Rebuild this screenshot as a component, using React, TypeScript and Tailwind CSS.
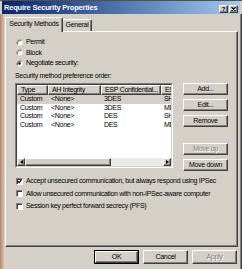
import React from "react";

const face = "bg-[#d4d0c8]";
const raised =
  "border border-t-white border-l-white border-r-[#404040] border-b-[#404040] shadow-[inset_-1px_-1px_0_#808080]";

const rows = [
  ["Custom", "<None>", "3DES", "SHA1"],
  ["Custom", "<None>", "3DES", "MD5"],
  ["Custom", "<None>", "DES", "SHA1"],
  ["Custom", "<None>", "DES", "MD5"],
];

const cols = ["w-[31px]", "w-[53px]", "w-[60px]", "w-[40px]"];

function Radio({ checked }: { checked?: boolean }) {
  return (
    <svg width="7" height="7" viewBox="0 0 14 14" className="shrink-0">
      <circle cx="7" cy="7" r="6" fill="#fff" />
      <path d="M11.2 2.8 A6 6 0 0 0 2.8 11.2" stroke="#808080" strokeWidth="2" fill="none" />
      <path d="M10 4 A4.3 4.3 0 0 0 4 10" stroke="#404040" strokeWidth="1.4" fill="none" />
      {checked && <circle cx="7" cy="7" r="2.4" fill="#000" />}
    </svg>
  );
}

function Check({ checked }: { checked?: boolean }) {
  return (
    <div className="w-[7px] h-[7px] shrink-0 bg-white border border-t-[#808080] border-l-[#808080] border-b-white border-r-white shadow-[inset_1px_1px_0_#404040] flex items-center justify-center">
      {checked && (
        <svg width="5" height="5" viewBox="0 0 7 7">
          <path d="M1 3 L3 5 L6 1.5" stroke="#000" strokeWidth="1.6" fill="none" />
        </svg>
      )}
    </div>
  );
}

function Btn({
  label,
  disabled,
  wide = "w-[45px]",
  tall = "h-[12px]",
}: {
  label: string;
  disabled?: boolean;
  wide?: string;
  tall?: string;
}) {
  return (
    <div className={`${wide} ${tall} ${face} ${raised} flex items-center justify-center`}>
      <span className={disabled ? "text-[#808080] [text-shadow:1px_1px_0_#fff]" : "text-black"}>{label}</span>
    </div>
  );
}

export default function App() {
  return (
    <div className="w-[242px] h-[269px] overflow-hidden bg-[#d4d0c8] flex flex-col font-['Liberation_Sans',Arial,sans-serif] text-[7px] tracking-[-0.3px] text-black">
      {/* desktop edge */}
      <div className="h-[1px] bg-[#4a5544]" />

      {/* title bar */}
      <div className="h-[13px] mx-[2px] flex items-center bg-gradient-to-r from-[#0a246a] to-[#a6caf0]">
        <span className="pl-[2px] text-white font-bold text-[7.5px] tracking-[-0.2px] flex-1">
          Require Security Properties
        </span>
        <div className="flex gap-[1px] pr-[2px] pt-[2px]">
          <div className={`w-[9px] h-[8px] ${face} ${raised} flex items-center justify-center font-bold text-[6px] tracking-normal leading-none`}>
            ?
          </div>
          <div className={`w-[9px] h-[8px] ${face} ${raised} flex items-center justify-center`}>
            <svg width="5" height="4" viewBox="0 0 5 4">
              <path d="M0.5 0 L4.5 4 M4.5 0 L0.5 4" stroke="#000" strokeWidth="1.1" />
            </svg>
          </div>
        </div>
      </div>

      <div className="flex-1 flex">
        {/* desktop showing at the left edge */}
        <div className="w-[4px] bg-gradient-to-r from-[#b88462] to-[#d6c2b4]" />

        <div className="flex-1 flex flex-col pt-[3px]">
          {/* tabs */}
          <div className="flex items-end h-[14px] ml-[1px]">
            <div className={`relative z-10 -mb-[1px] w-[58px] h-[15px] ${face} border-t border-l border-t-white border-l-white border-r border-r-[#404040] shadow-[inset_-1px_0_0_#808080] rounded-t-[2px] flex items-center justify-center pb-[1px]`}>
              Security Methods
            </div>
            <div className={`w-[29px] h-[12px] ${face} border-t border-t-white border-r border-r-[#404040] shadow-[inset_-1px_0_0_#808080] rounded-tr-[2px] flex items-center justify-center`}>
              General
            </div>
          </div>

          {/* tab page */}
          <div className={`ml-[1px] w-[233px] h-[216px] ${face} ${raised} flex flex-col pl-[9px] pt-[5px]`}>
            <div className="h-[10.5px] flex items-center gap-[3px] pl-[1px]">
              <Radio />
              <span>Permit</span>
            </div>
            <div className="h-[10.5px] flex items-center gap-[3px] pl-[1px]">
              <Radio />
              <span>Block</span>
            </div>
            <div className="h-[10.5px] flex items-center gap-[3px] pl-[1px]">
              <Radio checked />
              <span>Negotiate security:</span>
            </div>

            <div className="h-[10px] mt-[2.5px] flex items-center">Security method preference order:</div>

            <div className="flex mt-[2px] gap-[10px]">
              {/* list view */}
              <div className="w-[158px] h-[85px] border border-t-[#808080] border-l-[#808080] border-b-white border-r-white">
                <div className="h-full bg-white border border-t-[#404040] border-l-[#404040] border-b-[#d4d0c8] border-r-[#d4d0c8] flex flex-col overflow-hidden">
                  <div className="h-[10px] flex shrink-0">
                    {["Type", "AH Integrity", "ESP Confidential...", "ES"].map((h, i) => (
                      <div
                        key={h}
                        className={`${cols[i]} shrink-0 h-full ${face} ${raised} flex items-center pl-[3px] whitespace-nowrap overflow-hidden`}
                      >
                        {h}
                      </div>
                    ))}
                  </div>
                  {rows.map((r, ri) => (
                    <div key={ri} className={`h-[8.5px] flex shrink-0 ${ri === 0 ? "bg-[#d4d0c8]" : ""}`}>
                      {r.map((c, i) => (
                        <div key={i} className={`${cols[i]} shrink-0 flex items-center pl-[3px] whitespace-nowrap`}>
                          {c}
                        </div>
                      ))}
                    </div>
                  ))}
                  <div className="flex-1" />
                  {/* horizontal scrollbar */}
                  <div className="h-[8px] flex shrink-0">
                    <div className={`w-[8px] h-full ${face} ${raised} flex items-center justify-center`}>
                      <svg width="3" height="4" viewBox="0 0 3 4">
                        <path d="M3 0 L0 2 L3 4 Z" fill="#000" />
                      </svg>
                    </div>
                    <div className={`w-[86px] h-full ${face} ${raised}`} />
                    <div className="flex-1 h-full bg-[#ebe9e5]" />
                    <div className={`w-[8px] h-full ${face} ${raised} flex items-center justify-center`}>
                      <svg width="3" height="4" viewBox="0 0 3 4">
                        <path d="M0 0 L3 2 L0 4 Z" fill="#000" />
                      </svg>
                    </div>
                  </div>
                </div>
              </div>

              {/* action buttons */}
              <div className="flex flex-col gap-[4px]">
                <Btn label="Add..." />
                <Btn label="Edit..." />
                <Btn label="Remove" />
                <div className="h-[8px]" />
                <Btn label="Move up" disabled />
                <Btn label="Move down" />
              </div>
            </div>

            <div className="mt-[4px] flex flex-col pl-[1px]">
              <div className="h-[12.5px] flex items-center gap-[3px]">
                <Check checked />
                <span>Accept unsecured communication, but always respond using IPSec</span>
              </div>
              <div className="h-[12.5px] flex items-center gap-[3px]">
                <Check />
                <span>Allow unsecured communication with non-IPSec-aware computer</span>
              </div>
              <div className="h-[12.5px] flex items-center gap-[3px]">
                <Check />
                <span>Session key perfect forward secrecy (PFS)</span>
              </div>
            </div>
          </div>

          {/* dialog buttons */}
          <div className="flex justify-end gap-[4px] mt-[3px] pr-[3px]">
            <div className="w-[45px] h-[14px] border border-black flex">
              <div className={`flex-1 ${face} ${raised} flex items-center justify-center`}>OK</div>
            </div>
            <Btn label="Cancel" tall="h-[14px]" />
            <Btn label="Apply" tall="h-[14px]" disabled />
          </div>
        </div>

        {/* right window frame */}
        <div className="w-[2px] bg-[#404040] border-l border-l-[#808080]" />
      </div>
    </div>
  );
}
